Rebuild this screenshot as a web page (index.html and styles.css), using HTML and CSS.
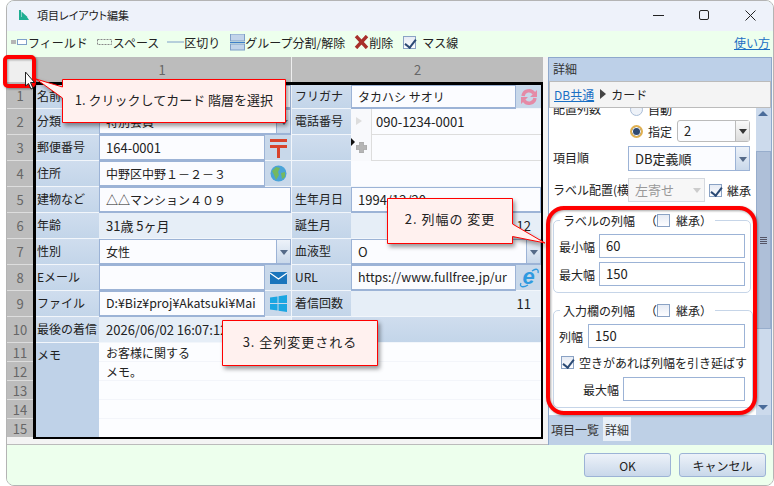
FILE: index.html
```html
<!DOCTYPE html>
<html>

  <head>
    <link rel="stylesheet" href="styles.css">
  </head>

  <body>
    <div class="window">
      <div class="titlebar">
        <svg class="app-icon" width="11" height="11" viewBox="0 0 11 11"><path d="M1 0H3V7H9L11 10H1Z M3.5 1.5L9.5 7H3.5Z" fill="#1fae92"/></svg>
        <span class="title-text">項目レイアウト編集</span>
        <div class="window-buttons">
          <svg width="11" height="11" viewBox="0 0 11 11"><path d="M0 5.5H11" stroke="#222"/></svg>
          <svg width="11" height="11" viewBox="0 0 11 11"><rect x=".5" y=".5" width="9" height="9" rx="1.5" fill="none" stroke="#222"/></svg>
          <svg width="11" height="11" viewBox="0 0 11 11"><path d="M.5 .5L10.5 10.5M10.5 .5L.5 10.5" stroke="#222"/></svg>
        </div>
      </div>

      <div class="toolbar">
        <span class="tool">
          <svg width="17" height="8" viewBox="0 0 17 8"><rect x="0" y="2" width="5" height="4" fill="#b5b5b5"/><rect x="6.5" y="1.5" width="9" height="5" fill="#fff" stroke="#7f9fc8"/></svg>フィールド
        </span>
        <span class="tool">
          <svg width="17" height="8" viewBox="0 0 17 8"><rect x="1.5" y="1.5" width="14" height="5" fill="none" stroke="#888" stroke-dasharray="2 1"/></svg>スペース
        </span>
        <span class="tool tool-wide">
          <svg width="17" height="8" viewBox="0 0 17 8"><path d="M0 4H17" stroke="#7f9fc8"/></svg>区切り
        </span>
        <span class="tool tool-group">
          <svg width="15" height="17" viewBox="0 0 15 17"><rect x=".5" y="0" width="14" height="7" fill="#c2d4ea" stroke="#7f9fc8"/><path d="M0 8.5H15" stroke="#3f7fc8"/><rect x=".5" y="10" width="14" height="6" fill="#c2d4ea" stroke="#7f9fc8"/></svg>グループ分割/解除
        </span>
        <span class="tool tool-wide">
          <svg width="15" height="14" viewBox="0 0 15 14"><path d="M2 1L13 13M13 1L2 13" stroke="#a8302a" stroke-width="3.4"/></svg>削除
        </span>
        <span class="tool tool-check"><span class="check on"></span>マス線</span>
        <a class="link help-link">使い方</a>
      </div>

      <div class="content">
        <div class="sheet">
          <div class="col-heads">
            <div class="corner"></div>
            <div class="col-head col-one">1</div>
            <div class="col-head col-two">2</div>
          </div>
          <div class="sheet-body">
            <div class="row-nums">
              <div>1</div><div>2</div><div>3</div><div>4</div><div>5</div>
              <div>6</div><div>7</div><div>8</div><div>9</div><div>10</div>
              <div>11</div><div>12</div><div>13</div><div>14</div><div>15</div>
            </div>
            <div class="card">
              <div class="lbl">名前</div>
              <div class="val span2">高橋 沙織</div>
              <div class="lbl lb2">フリガナ</div>
              <div class="val">タカハシ サオリ</div>
              <div class="icon-btn">
                <svg width="18" height="18" viewBox="0 0 18 18"><g fill="none" stroke="#e58aa6" stroke-width="3.400"><path d="M3 8A6 6 0 0 1 14 5.500"/><path d="M15 10A6 6 0 0 1 4 12.500"/></g><path d="M17 2V9H10Z M1 16V9H8Z" fill="#e58aa6"/></svg>
              </div>

              <div class="lbl">分類</div>
              <div class="val span2 sel">特別会員<i class="sel-btn"></i></div>
              <div class="lbl lb2">電話番号</div>
              <div class="phones">
                <div class="phone-row"><span class="mark"></span><span class="phone-val">090-1234-0001</span></div>
                <div class="phone-row phone-new">
                  <span class="mark-new">
                    <svg width="11" height="11" viewBox="0 0 11 11"><path d="M3.500 0H7.500V3.500H11V7.500H7.500V11H3.500V7.500H0V3.500H3.500Z" fill="#b5b5b5" stroke="#999" stroke-width=".6"/></svg>
                  </span>
                  <span class="phone-val"></span>
                </div>
              </div>

              <div class="lbl">郵便番号</div>
              <div class="val lat">164-0001</div>
              <div class="icon-btn">
                <svg width="17" height="20" viewBox="0 0 17 20"><path d="M0 1H17V4H0Z M0 7H17V10H0Z M7 10H10V20H7Z" fill="#d8432c"/></svg>
              </div>
              <div class="lbl lb2"></div>

              <div class="lbl">住所</div>
              <div class="val">中野区中野１－２－３</div>
              <div class="icon-btn">
                <svg width="17" height="17" viewBox="0 0 17 17"><circle cx="8.500" cy="8.500" r="8" fill="#4aa3d8"/><path d="M2 6L6 2L10 3L8 7L9 10L6 15L4 10Z M11 8L15 7L15 12L12 14Z" fill="#74b860"/></svg>
              </div>
              <div class="lbl lb2"></div>

              <div class="lbl">建物など</div>
              <div class="val span2">△△マンション４０９</div>
              <div class="lbl lb2">生年月日</div>
              <div class="val span2 lat">1994/12/20</div>

              <div class="lbl">年齢</div>
              <div class="val span2 ro lat">31歳 5ヶ月</div>
              <div class="lbl lb2">誕生月</div>
              <div class="val span2 ro num lat">12</div>

              <div class="lbl">性別</div>
              <div class="val span2 sel">女性<i class="sel-btn"></i></div>
              <div class="lbl lb2">血液型</div>
              <div class="val span2 sel lat">O<i class="sel-btn"></i></div>

              <div class="lbl">Eメール</div>
              <div class="val"></div>
              <div class="icon-btn">
                <svg width="17" height="12" viewBox="0 0 17 12"><rect width="17" height="12" fill="#1b75bc"/><path d="M0 1L8.500 7L17 1" fill="none" stroke="#fff" stroke-width="1.200"/></svg>
              </div>
              <div class="lbl lb2">URL</div>
              <div class="val clip">https://www.fullfree.jp/ur</div>
              <div class="icon-btn">
                <svg width="20" height="20" viewBox="0 0 20 20"><text x="9.500" y="16" class="ie-text">e</text><path d="M2 15C0 19 4 20 9 17M13 3C17 0 20 1 19 5" fill="none" stroke="#2f9ae0" stroke-width="1.300"/></svg>
              </div>

              <div class="lbl">ファイル</div>
              <div class="val clip">D:¥Biz¥proj¥Akatsuki¥Mai</div>
              <div class="icon-btn">
                <svg width="17" height="17" viewBox="0 0 17 17"><path d="M0 2.500L7.500 1.400V8H0Z M8.500 1.200L17 0V8H8.500Z M0 9H7.500V15.600L0 14.500Z M8.500 9H17V17L8.500 15.800Z" fill="#1ba6e2"/></svg>
              </div>
              <div class="lbl lb2">着信回数</div>
              <div class="val span2 ro num lat">11</div>

              <div class="lbl">最後の着信</div>
              <div class="val span2 ro lat">2026/06/02 16:07:12</div>
              <div class="lbl lb2 span3"></div>

              <div class="lbl memo-lbl">メモ</div>
              <div class="memo">お客様に関する<br>メモ。</div>
            </div>
          </div>
        </div>

        <div class="panel">
          <div class="panel-head">詳細</div>
          <div class="crumbs"><a class="link">DB共通</a><i class="crumb-arrow"></i>カード</div>
          <div class="panel-main">
            <div class="props">
              <div class="prop-row row-auto">
                <span class="prop-name">配置列数</span>
                <span class="radio"></span><span>自動</span>
              </div>
              <div class="prop-row row-fixed">
                <span class="radio on"></span><span>指定</span>
                <div class="combo combo-num">2<i class="combo-btn dark"></i></div>
              </div>
              <div class="prop-row row-order">
                <span class="prop-name">項目順</span>
                <div class="combo combo-wide">DB定義順<i class="combo-btn"></i></div>
              </div>
              <div class="prop-row row-align">
                <span class="prop-name">ラベル配置(横</span>
                <div class="combo combo-off">左寄せ<i class="combo-btn"></i></div>
                <span class="check on"></span><span>継承</span>
              </div>

              <fieldset class="group group-label">
                <legend>ラベルの列幅<span class="paren">（</span><span class="check"></span><span>継承）</span></legend>
                <div class="field"><span class="field-name">最小幅</span><div class="box box-a">60</div></div>
                <div class="field"><span class="field-name">最大幅</span><div class="box box-a">150</div></div>
              </fieldset>

              <fieldset class="group group-input">
                <legend>入力欄の列幅<span class="paren">（</span><span class="check"></span><span>継承）</span></legend>
                <div class="field"><span class="field-name">列幅</span><div class="box box-b">150</div></div>
                <div class="field stretch-row"><span class="check on"></span><span>空きがあれば列幅を引き延ばす</span></div>
                <div class="field max-row"><span class="field-name">最大幅</span><div class="box box-c"></div></div>
              </fieldset>
            </div>
            <div class="scrollbar">
              <i class="arrow-up"></i>
              <div class="thumb"><i class="grip"></i></div>
              <i class="arrow-down"></i>
            </div>
          </div>
          <div class="tabs">
            <span class="tab">項目一覧</span>
            <span class="tab tab-on">詳細</span>
          </div>
        </div>
      </div>

      <div class="footer">
        <button class="btn">OK</button>
        <button class="btn">キャンセル</button>
      </div>
    </div>

    <!-- annotations drawn over the window -->
    <svg class="notes" width="774" height="486" viewBox="0 0 774 486">
      <rect class="frame" x="5" y="57" width="29" height="29" rx="3"/>
      <rect class="frame" x="548" y="208" width="207" height="205" rx="16"/>
      <path class="cursor" d="M25.500 72V86L28.500 83.500L31 89L33 88L30.500 82.500H34.500Z"/>
      <path class="bubble" d="M62.500 79.500H285.500V122.500H62.500V98L36 79L62.500 87Z"/>
      <path class="bubble" d="M387.500 198.500H512.500V224L545 243L512.500 236.500V243.500H387.500Z"/>
      <path class="bubble" d="M222.500 320.500H377.500V365.500H222.500Z"/>
    </svg>
    <div class="note note-one">1. クリックしてカード 階層を選択</div>
    <div class="note note-two">2. 列幅の 変更</div>
    <div class="note note-three">3. 全列変更される</div>
  </body>

</html>
```

FILE: styles.css
```css
* {
  box-sizing: border-box;
}

body {
  margin: 0;
  width: 774px;
  height: 486px;
  overflow: hidden;
  background: #fff;
  font-family: "Noto Sans CJK JP", sans-serif;
  font-size: 12px;
  color: #222;
}

.window {
  margin-left: 6px;
  width: 768px;
  height: 486px;
  display: flex;
  flex-direction: column;
  border: 1px solid #b4b4b4;
  border-radius: 8px;
  background: #edffed;
  overflow: hidden;
}

.titlebar {
  height: 30px;
  flex: none;
  display: flex;
  align-items: center;
  padding: 0 0 2px 11px;
  background: #eef2fa;
}

.title-text {
  margin-left: 8px;
  font-size: 11px;
  font-feature-settings: "palt";
}

.window-buttons {
  margin-left: auto;
  display: flex;
  gap: 35px;
  padding-right: 17px;
}

.toolbar {
  height: 26px;
  flex: none;
  display: flex;
  align-items: center;
  padding: 0 0 4px 4px;
  background: #edffed;
}

.tool {
  display: flex;
  align-items: center;
  margin-right: 8px;
  white-space: nowrap;
}

.tool-wide {
  margin-right: 10px;
}

.tool-group {
  margin-right: 9px;
}

.tool-check .check {
  margin-right: 6px;
}

.link {
  color: #1a6fc4;
  text-decoration: underline;
}

.help-link {
  margin-left: auto;
  margin-right: 3px;
}

.check {
  display: inline-block;
  width: 13px;
  height: 13px;
  flex: none;
  border: 1px solid #8aa2c4;
  background: linear-gradient(#e6ebf4, #fdfdff);
  position: relative;
}

.check.on::after {
  content: "";
  position: absolute;
  left: 3px;
  top: 0;
  width: 5px;
  height: 9px;
  border: solid #2b4a75;
  border-width: 0 2px 2px 0;
  transform: rotate(38deg);
}

.content {
  flex: 1;
  display: flex;
  background: #f4f4f4;
  min-height: 0;
}

.sheet {
  width: 541px;
  flex: none;
  border-bottom: 1px solid #bbb;
}

.col-heads {
  display: flex;
  height: 25px;
  width: 536px;
  background: #bcbcbc;
  color: #666;
  font-size: 13px;
}

.corner {
  width: 26px;
  background: #efefef;
}

.col-head {
  display: flex;
  align-items: center;
  justify-content: center;
}

.col-one {
  width: 259px;
  border-right: 1px solid #eee;
}

.col-two {
  width: 251px;
}

.sheet-body {
  display: flex;
  height: 357px;
}

.row-nums {
  width: 26px;
  flex: none;
  display: grid;
  grid-template-rows: 27px repeat(9, 26px) repeat(4, 19px) 18px;
  height: 355px;
  background: #bcbcbc;
  color: #666;
  font-size: 13px;
  text-align: center;
}

.row-nums div {
  border-bottom: 1px solid #ddd;
  display: flex;
  align-items: center;
  justify-content: center;
}

.row-nums div:last-child {
  border-bottom: 0;
}

.card {
  width: 510px;
  height: 357px;
  display: grid;
  grid-template-columns: 63px 166px 26px 60px 165px 25px;
  grid-template-rows: 24px repeat(9, 26px) repeat(4, 19px) 18px;
  border: solid #000;
  border-width: 3px 2px 2px 3px;
  background: #c8d8ea;
}

.lbl {
  display: flex;
  align-items: center;
  padding: 0 0 2px 1px;
  background: linear-gradient(#cfddee, #c3d5e9);
  border-bottom: 1px solid #f2f6fb;
  white-space: nowrap;
  overflow: hidden;
}

.lb2 {
  padding-left: 3px;
  border-left: 1px solid #f2f6fb;
}

.val {
  position: relative;
  display: flex;
  align-items: center;
  padding: 0 0 1px 6px;
  background: #fbfcff;
  border: 1px solid #9cb3d6;
  border-width: 1px 1px 2px 1px;
  white-space: nowrap;
  overflow: hidden;
}

.span2 {
  grid-column: span 2;
}

.span3 {
  grid-column: span 3;
}

.lat {
  font-size: 13px;
}

.clip {
  font-size: 12.4px;
}

.ro {
  background: #e6eef7;
  border-color: #e6eef7;
  border-bottom: 1px solid #f2f6fb;
}

.num {
  justify-content: flex-end;
  padding-right: 9px;
}

.sel-btn {
  position: absolute;
  right: 0;
  top: 0;
  bottom: 0;
  width: 14px;
  background: linear-gradient(#edf2f9, #c9d8ea);
  border-left: 1px solid #9cb3d6;
}

.sel-btn::after,
.combo-btn::after {
  content: "";
  position: absolute;
  left: 3px;
  top: 50%;
  margin-top: -2px;
  border: 4px solid transparent;
  border-top: 5px solid #556a88;
  border-bottom: 0;
}

.icon-btn {
  display: flex;
  align-items: center;
  justify-content: center;
  background: #c8d8ea;
  border-bottom: 1px solid #f2f6fb;
}

.ie-text {
  font-family: "Liberation Sans", sans-serif;
  font-size: 22px;
  font-weight: bold;
  font-style: italic;
  fill: #2f9ae0;
  text-anchor: middle;
}

.phones {
  grid-column: 5 / span 2;
  grid-row: 2 / span 3;
  background: #fbfcff;
  border-bottom: 1px solid #f2f6fb;
  overflow: hidden;
}

.phone-row {
  display: flex;
  height: 26px;
}

.mark,
.mark-new {
  width: 21px;
  position: relative;
  border-right: 1px solid #ddd;
  background: #f8f9fc;
}

.mark::after {
  content: "";
  position: absolute;
  left: 5px;
  top: 8px;
  border: 4px solid transparent;
  border-left: 6px solid #ddd;
  border-right: 0;
}

.mark-new::before {
  content: "";
  position: absolute;
  left: 0;
  top: 3px;
  border: 4px solid transparent;
  border-left: 4px solid #111;
  border-right: 0;
}

.mark-new svg {
  position: absolute;
  left: 5px;
  top: 7px;
}

.phone-val {
  flex: 1;
  display: flex;
  align-items: center;
  padding: 0 0 1px 4px;
  font-size: 13px;
  border-bottom: 1px solid #ddd;
}

.memo-lbl {
  grid-row: 11 / span 5;
  align-items: flex-start;
  padding-top: 3px;
  background: #bfd2e8;
  border-bottom: 0;
}

.memo {
  grid-column: 2 / span 5;
  grid-row: 11 / span 5;
  padding-left: 7px;
  line-height: 19px;
  background: repeating-linear-gradient(#fcfdff 0, #fcfdff 18px, #f3f5fa 18px, #f3f5fa 19px);
}

.panel {
  width: 224px;
  flex: none;
  display: flex;
  flex-direction: column;
  background: #bed0e6;
  border-left: 1px solid #8ea8cc;
  border-right: 1px solid #8ea8cc;
  border-top: 1px solid #8ea8cc;
}

.panel-head {
  height: 23px;
  flex: none;
  display: flex;
  align-items: center;
  padding: 0 0 2px 4px;
  background: #bdd0e8;
  color: #333;
}

.crumbs {
  height: 27px;
  flex: none;
  display: flex;
  align-items: center;
  padding: 0 0 1px 4px;
  background: #f4f4f4;
  border: 1px solid #bbb;
}

.crumb-arrow {
  margin: 0 5px 0 6px;
  border: 5px solid transparent;
  border-left: 6px solid #444;
  border-right: 0;
}

.panel-main {
  height: 307px;
  flex: none;
  display: flex;
  background: #fff;
  overflow: hidden;
}

.props {
  width: 207px;
  flex: none;
  padding-left: 4px;
}

.prop-row {
  display: flex;
  align-items: center;
  white-space: nowrap;
}

.prop-name {
  width: 75px;
  flex: none;
  overflow: hidden;
  margin-top: -2px;
}

.row-auto {
  height: 16px;
  margin-top: -7px;
  margin-bottom: 3px;
}

.row-auto .radio {
  margin-left: 2px;
  margin-right: 5px;
}

.row-fixed {
  height: 22px;
  padding-left: 77px;
  margin-bottom: 4px;
}

.row-fixed .radio {
  margin-right: 5px;
}

.row-order {
  height: 25px;
  margin-bottom: 7px;
}

.row-align {
  height: 24px;
  margin-bottom: 10px;
}

.row-align .check {
  margin: 0 5px 0 4px;
}

.radio {
  display: inline-block;
  width: 13px;
  height: 13px;
  flex: none;
  border: 1px solid #a9bcd6;
  border-radius: 50%;
  background: #eef2f8;
}

.radio.on {
  background: #2f4a72;
  border: 2px solid #e0b050;
  box-shadow: inset 0 0 0 1px #fff;
}

.combo {
  position: relative;
  height: 100%;
  display: flex;
  align-items: center;
  padding: 0 0 1px 6px;
  border: 1px solid #9cb3d6;
  background: #fbfcff;
  font-size: 13px;
}

.combo-num {
  width: 73px;
  margin-left: 5px;
  border-color: #bbb;
  border-radius: 3px;
}

.combo-wide {
  width: 122px;
}

.combo-off {
  width: 77px;
  color: #999;
  border-color: #d5d9df;
  background: #f7f7f7;
}

.combo-off .combo-btn {
  background: none;
  border: 0;
}

.combo-off .combo-btn::after {
  border-top-color: #ccc;
}

.combo-btn {
  position: absolute;
  right: 0;
  top: 0;
  bottom: 0;
  width: 14px;
  background: linear-gradient(#edf2f9, #c9d8ea);
  border-left: 1px solid #9cb3d6;
}

.combo-btn.dark {
  background: linear-gradient(#fafafa, #dcdcdc);
  border-left-color: #bbb;
}

.combo-btn.dark::after {
  border-top-color: #333;
}

.group {
  width: 198px;
  margin: 0;
  padding: 6px 5px 0 5px;
  border: 1px solid #c6d5e8;
  border-radius: 5px;
}

.group legend {
  display: flex;
  align-items: center;
  height: 16px;
  margin-left: 1px;
  padding: 0 3px;
}

.paren {
  margin-left: 10px;
}

.group legend .check {
  margin: 0 6px 0 0;
}

.group-label {
  height: 81px;
}

.group-input {
  height: 106px;
  margin-top: 9px;
}

.field {
  display: flex;
  align-items: center;
  margin-bottom: 4px;
}

.field-name {
  white-space: nowrap;
}

.box {
  height: 24px;
  display: flex;
  align-items: center;
  padding: 0 0 1px 6px;
  border: 1px solid #9cb3d6;
  background: #fff;
  font-size: 13px;
}

.box-a {
  width: 146px;
  margin-left: 4px;
}

.box-b {
  width: 157px;
  margin-left: 5px;
}

.box-c {
  width: 122px;
  margin-left: 4px;
}

.stretch-row {
  height: 20px;
  margin: 2px 0 5px 2px;
  white-space: nowrap;
}

.stretch-row .check {
  margin-right: 5px;
}

.max-row {
  padding-left: 24px;
}

.scrollbar {
  width: 15px;
  flex: none;
  position: relative;
  background: #ccdaec;
}

.thumb {
  position: absolute;
  left: 0;
  right: 0;
  top: 43px;
  height: 178px;
  display: flex;
  align-items: center;
  justify-content: center;
  background: #aebfd8;
  border: 1px solid #97adcc;
}

.grip {
  width: 7px;
  height: 7px;
  background: repeating-linear-gradient(#556 0, #556 1px, transparent 1px, transparent 2px);
}

.arrow-up,
.arrow-down {
  position: absolute;
  left: 2px;
  border: 5px solid transparent;
}

.arrow-up {
  top: 3px;
  border-top: 0;
  border-bottom: 5px solid #4a6c9a;
}

.arrow-down {
  bottom: 5px;
  border-bottom: 0;
  border-top: 5px solid #4a6c9a;
}

.tabs {
  flex: 1;
  display: flex;
  padding: 2px 0 0 2px;
  gap: 4px;
  color: #333;
}

.tab {
  height: 24px;
  display: flex;
  align-items: center;
}

.tab-on {
  background: #e8eff8;
  padding: 0 2px;
}

.footer {
  height: 40px;
  flex: none;
  display: flex;
  justify-content: flex-end;
  align-items: flex-start;
  gap: 8px;
  padding: 8px 7px 0 0;
  background: #edffed;
}

.btn {
  width: 87px;
  height: 24px;
  padding: 0;
  font-family: inherit;
  font-size: 12px;
  color: #222;
  border: 1px solid #9cb3d6;
  border-radius: 3px;
  background: linear-gradient(#edf2f9, #c9d8ea);
}

.notes {
  position: absolute;
  left: 0;
  top: 0;
}

.frame {
  fill: none;
  stroke: #f00;
  stroke-width: 4;
  filter: drop-shadow(1px 1px 1px rgba(0, 0, 0, .35));
}

.cursor {
  fill: #fff;
  stroke: #222;
}

.bubble {
  fill: #fff1ef;
  stroke: #f00;
  filter: drop-shadow(2px 3px 2px rgba(0, 0, 0, .4));
}

.note {
  position: absolute;
  display: flex;
  align-items: center;
  justify-content: center;
  font-size: 13px;
  white-space: nowrap;
}

.note-one {
  left: 63px;
  top: 78px;
  width: 222px;
  height: 42px;
}

.note-two {
  left: 388px;
  top: 198px;
  width: 124px;
  height: 41px;
  letter-spacing: 1px;
}

.note-three {
  left: 223px;
  top: 319px;
  width: 154px;
  height: 44px;
  letter-spacing: 1px;
}
```
